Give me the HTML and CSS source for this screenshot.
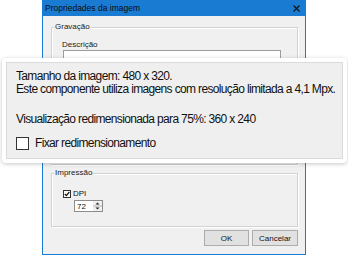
FILE: index.html
```html
<!DOCTYPE html>
<html lang="pt">
<head>
  <meta charset="UTF-8">
  <title>Propriedades da imagem</title>
  <link rel="stylesheet" href="styles.css">
</head>
<body>
  <div class="dialog">
    <div class="titlebar">
      <span class="title">Propriedades da imagem</span>
      <svg class="close" width="7" height="7" viewBox="0 0 7 7">
        <path d="M0.5 0.5 L6.5 6.5 M6.5 0.5 L0.5 6.5" stroke="#111" stroke-width="1.1"/>
      </svg>
    </div>
    <div class="dialog-body">
      <div class="group group-rec">
        <span class="caption">Gravação</span>
        <label class="field-label">Descrição</label>
        <div class="memo"></div>
      </div>
      <div class="group group-print">
        <span class="caption">Impressão</span>
        <div class="check-row">
          <span class="small-check">
            <svg width="6" height="6" viewBox="0 0 6 6"><path d="M0.8 3 L2.4 4.6 L5.3 1" fill="none" stroke="#111" stroke-width="1.2"/></svg>
          </span>
          <span>DPI</span>
        </div>
        <div class="spin">
          <span class="spin-value">72</span>
          <svg class="spin-buttons" width="9" height="10" viewBox="0 0 9 10">
            <path d="M2.5 3.5 L4.5 1.5 L6.5 3.5 Z" fill="#222"/>
            <path d="M0 5 H9" stroke="#b5b5b5" stroke-width="1"/>
            <path d="M2.5 6.5 L4.5 8.5 L6.5 6.5 Z" fill="#222"/>
          </svg>
        </div>
      </div>
      <div class="buttons">
        <button class="btn btn-ok">OK</button>
        <button class="btn btn-cancel">Cancelar</button>
      </div>
    </div>
  </div>

  <div class="tooltip">
    <div class="tooltip-inner">
      <p class="info">Tamanho da imagem: 480 x 320.<br>Este componente utiliza imagens com resolução limitada a 4,1 Mpx.</p>
      <p class="info resize">Visualização redimensionada para 75%: 360 x 240</p>
      <div class="fix-row">
        <span class="big-check"></span>
        <span>Fixar redimensionamento</span>
      </div>
    </div>
  </div>
</body>
</html>
```

FILE: styles.css
```css
/* General */
* {
  box-sizing: border-box;
}

body {
  margin: 0;
  background: #ffffff;
  position: relative;
  font-family: "Liberation Sans Narrow", "Liberation Sans", Arial, sans-serif;
  color: #111;
}

/* Dialog window */
.dialog {
  margin-left: 42px;
  width: 264px;
  height: 255px;
  display: flex;
  flex-direction: column;
}

.titlebar {
  height: 16px;
  background: #1a7bd2;
  display: flex;
  align-items: center;
  justify-content: space-between;
  padding: 0 6px 0 3px;
}

.title {
  font-size: 8.5px;
  color: #0b0b0b;
}

.dialog-body {
  flex: 1;
  background: #f0f0f0;
  border: 1px solid #1a7bd2;
  border-top: none;
  padding: 0 7px 0 8px;
  font-size: 8px;
  line-height: 9px;
}

.group {
  position: relative;
  border: 1px solid #d2d2d2;
  box-shadow: inset 1px 1px #fff, 1px 1px #fff;
}

.caption {
  position: absolute;
  top: -6px;
  left: 2px;
  padding: 0 1px;
  background: #f0f0f0;
  color: #222;
}

.group-rec {
  margin-top: 11px;
  height: 138px;
  padding: 12px 0 0 10px;
}

.field-label {
  display: block;
  color: #222;
}

.memo {
  margin: 1px 0 0 1px;
  width: 218px;
  height: 40px;
  background: #fff;
  border: 1px solid #9c9c9c;
}

.group-print {
  margin-top: 8px;
  height: 54px;
  padding: 15px 0 0 11px;
}

.check-row {
  display: flex;
  align-items: center;
  gap: 2px;
  height: 9px;
}

.small-check {
  width: 8px;
  height: 8px;
  border: 1px solid #333;
  background: #fff;
  display: flex;
  align-items: center;
  justify-content: center;
}

.spin {
  margin: 2px 0 0 11px;
  width: 29px;
  height: 12px;
  background: #fff;
  border: 1px solid #8c8c8c;
  display: flex;
  align-items: center;
  justify-content: space-between;
  padding: 0 0 0 2px;
}

.spin-buttons {
  background: #f0f0f0;
}

.buttons {
  margin-top: 3px;
  display: flex;
  justify-content: flex-end;
  gap: 3px;
}

.btn {
  height: 16px;
  padding: 0;
  background: #e1e1e1;
  border: 1px solid #adadad;
  font-family: inherit;
  font-size: 8px;
  color: #111;
}

.btn-ok {
  width: 45px;
}

.btn-cancel {
  width: 46px;
}

/* Info balloon over the dialog */
.tooltip {
  position: absolute;
  left: 2px;
  top: 58px;
  width: 345px;
  height: 105px;
  padding: 4px;
  background: #fff;
  border-radius: 4px;
  box-shadow: 0 1px 4px rgba(0, 0, 0, 0.22);
}

.tooltip-inner {
  height: 100%;
  background: #efefef;
  border: 1px solid #dadada;
  padding: 7px 0 0 9px;
  font-family: "Liberation Sans", Arial, sans-serif;
  font-size: 12px;
  line-height: 13px;
  letter-spacing: -0.65px;
  color: #111;
}

.info {
  margin: 0;
}

.resize {
  margin-top: 17px;
}

.fix-row {
  margin-top: 10px;
  height: 15px;
  display: flex;
  align-items: center;
  gap: 6px;
}

.big-check {
  width: 13px;
  height: 13px;
  background: #fff;
  border: 1px solid #333;
}
```
